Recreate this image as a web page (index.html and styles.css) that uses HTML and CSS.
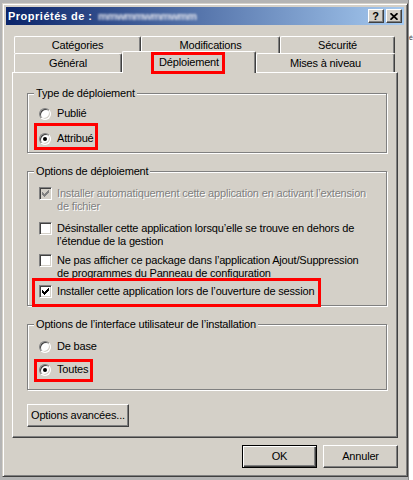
FILE: index.html
```html
<!DOCTYPE html>
<html lang="fr">
<head>
<meta charset="utf-8">
<title>Propriétés</title>
<link rel="stylesheet" href="styles.css">
</head>
<body>
<div class="window">
  <div class="titlebar">
    <span class="title">Propriétés de : <span class="blur">mmwmmwmmwmm</span></span>
    <div class="capbtns">
      <span class="capbtn help">?</span>
      <span class="capbtn close"><svg width="8" height="7" viewBox="0 0 8 7"><path d="M0.5 0.2 L7.5 6.8 M7.5 0.2 L0.5 6.8" stroke="#000" stroke-width="1.7" fill="none"/></svg></span>
    </div>
  </div>
  <div class="client">
    <div class="tabs">
      <div class="tabrow row1">
        <div class="tab w-cat">Catégories</div>
        <div class="tab w-mod">Modifications</div>
        <div class="tab w-sec">Sécurité</div>
      </div>
      <div class="tabrow row2">
        <div class="tab w-gen">Général</div>
        <div class="tab w-dep sel"><span class="hl hl-dep">Déploiement</span></div>
        <div class="tab w-maj">Mises à niveau</div>
      </div>
    </div>
    <div class="panel">
      <div class="group g1">
        <div class="legend">Type de déploiement</div>
        <div class="opt o-pub"><span class="radio"></span><span class="txt">Publié</span></div>
        <div class="opt o-att hl hl-attr"><span class="radio on"></span><span class="txt">Attribué</span></div>
      </div>
      <div class="group g2">
        <div class="legend">Options de déploiement</div>
        <div class="opt c1 disabled"><span class="check dis"><svg width="13" height="13" viewBox="0 0 13 13"><g fill="#808080"><rect x="3" y="5" width="1" height="3"/><rect x="4" y="6" width="1" height="3"/><rect x="5" y="7" width="1" height="3"/><rect x="6" y="6" width="1" height="3"/><rect x="7" y="5" width="1" height="3"/><rect x="8" y="4" width="1" height="3"/><rect x="9" y="3" width="1" height="3"/></g></svg></span><span class="txt">Installer automatiquement cette application en activant l’extension<br>de fichier</span></div>
        <div class="opt c2"><span class="check"></span><span class="txt">Désinstaller cette application lorsqu’elle se trouve en dehors de<br>l’étendue de la gestion</span></div>
        <div class="opt c3"><span class="check"></span><span class="txt">Ne pas afficher ce package dans l’application Ajout/Suppression<br>de programmes du Panneau de configuration</span></div>
        <div class="opt c4 hl hl-inst"><span class="check"><svg width="13" height="13" viewBox="0 0 13 13"><g fill="#000"><rect x="3" y="5" width="1" height="3"/><rect x="4" y="6" width="1" height="3"/><rect x="5" y="7" width="1" height="3"/><rect x="6" y="6" width="1" height="3"/><rect x="7" y="5" width="1" height="3"/><rect x="8" y="4" width="1" height="3"/><rect x="9" y="3" width="1" height="3"/></g></svg></span><span class="txt">Installer cette application lors de l’ouverture de session</span></div>
      </div>
      <div class="group g3">
        <div class="legend">Options de l’interface utilisateur de l’installation</div>
        <div class="opt o-base"><span class="radio"></span><span class="txt">De base</span></div>
        <div class="opt o-tout hl hl-tout"><span class="radio on"></span><span class="txt">Toutes</span></div>
      </div>
      <div class="btn adv">Options avancées...</div>
    </div>
    <div class="footer">
      <div class="btn default">OK</div>
      <div class="btn">Annuler</div>
    </div>
  </div>
</div>
<div class="behind"><span class="behind-txt">é</span></div>
</body>
</html>
```
FILE: styles.css
```css
* { box-sizing: border-box; }
html, body { margin: 0; padding: 0; }
body {
  width: 413px;
  height: 480px;
  overflow: hidden;
  background: #b4b4b4;
  display: flex;
  align-items: flex-start;
  padding: 3px 0 0 2px;
  font-family: "Liberation Sans", Arial, sans-serif;
  font-size: 11px;
  line-height: 13px;
  letter-spacing: -0.17px;
  color: #000;
}
.window {
  width: 406px;
  height: 474px;
  flex: none;
  background: #d4d0c8;
  border: 1px solid;
  border-color: #d4d0c8 #404040 #404040 #d4d0c8;
  box-shadow: inset 1px 1px #fff, inset -1px -1px #808080;
  padding: 3px;
  display: flex;
  flex-direction: column;
}
.behind {
  flex: 1;
  align-self: stretch;
  margin-top: -3px;
  background: #fff;
  border-left: 1px solid #8c8c8c;
  padding-top: 33px;
  overflow: hidden;
}
.behind-txt {
  display: block;
  font-size: 7px;
  line-height: 9px;
  letter-spacing: 0;
  color: #404040;
}
.titlebar {
  height: 18px;
  flex: none;
  background: linear-gradient(to right, #0a246a, #a6caf0);
  display: flex;
  align-items: center;
  padding: 0 2px;
}
.title {
  flex: 1;
  color: #fff;
  font-weight: bold;
  letter-spacing: 0.5px;
  white-space: nowrap;
  overflow: hidden;
}
.blur {
  color: #dfe2ec;
  filter: blur(1.3px);
  letter-spacing: -0.5px;
  font-weight: bold;
  margin-left: 2px;
}
.capbtns { display: flex; gap: 2px; }
.capbtn {
  width: 16px;
  height: 14px;
  background: #d4d0c8;
  border: 1px solid;
  border-color: #fff #404040 #404040 #fff;
  box-shadow: inset -1px -1px #808080;
  display: flex;
  align-items: center;
  justify-content: center;
  font-weight: bold;
  font-size: 11px;
  letter-spacing: 0;
}
.help { padding-right: 1px; }
.close svg { display: block; }
.client { flex: 1; display: flex; flex-direction: column; }
.tabs { margin: 11px 0 0 8px; width: 381px; }
.tabrow { display: flex; }
.row1 { height: 17px; }
.row2 { height: 19px; align-items: flex-end; }
.tab {
  background: #d4d0c8;
  border-top: 1px solid #fff;
  border-left: 1px solid #fff;
  border-right: 1px solid #404040;
  border-radius: 2px 2px 0 0;
  box-shadow: inset -1px 0 #808080;
  text-align: center;
  white-space: nowrap;
  flex: none;
}
.row1 .tab { height: 17px; padding-top: 2px; }
.row2 .tab { height: 19px; padding-top: 3px; }
.row2 .tab.sel {
  height: 22px;
  padding-top: 4px;
  margin-bottom: -1px;
  position: relative;
  z-index: 1;
}
.w-cat { width: 127px; }
.w-mod { width: 139px; }
.w-sec { width: 115px; }
.w-gen { width: 108px; }
.w-dep { width: 134px; }
.w-maj { width: 139px; }
.panel {
  margin-left: 6px;
  width: 386px;
  height: 366px;
  flex: none;
  border: 1px solid;
  border-color: #fff #404040 #404040 #fff;
  box-shadow: inset -1px -1px #808080;
  padding: 20px 0 0 14px;
}
.group {
  width: 360px;
  border: 1px solid #808080;
  box-shadow: inset 1px 1px #fff, 1px 1px #fff;
  padding-left: 11px;
}
.g1 { height: 60px; }
.g2 { height: 135px; margin-top: 18px; }
.g3 { height: 66px; margin-top: 18px; }
.legend {
  display: table;
  margin: -7px 0 0 -5px;
  padding: 0 2px;
  background: #d4d0c8;
  white-space: nowrap;
}
.opt { display: flex; width: fit-content; align-items: flex-start; white-space: nowrap; }
.o-pub { margin-top: 7px; }
.o-att { margin-top: 12px; }
.c1 { margin-top: 9px; }
.c2 { margin-top: 9px; }
.c3 { margin-top: 6px; }
.c4 { margin-top: 5px; }
.o-base { margin-top: 9px; }
.o-tout { margin-top: 10px; }
.radio {
  width: 12px;
  height: 12px;
  flex: none;
  margin: 1px 6px 0 0;
  border-radius: 50%;
  background: #fff;
  border: 1px solid;
  border-color: #808080 #fff #fff #808080;
  box-shadow: inset 1px 1px #404040, inset -1px -1px #d4d0c8;
  display: flex;
  align-items: center;
  justify-content: center;
}
.radio.on::after {
  content: "";
  width: 4px;
  height: 4px;
  border-radius: 50%;
  background: #000;
}
.check {
  width: 13px;
  height: 13px;
  flex: none;
  margin-right: 5px;
  background: #fff;
  border: 1px solid;
  border-color: #808080 #fff #fff #808080;
  box-shadow: inset 1px 1px #404040, inset -1px -1px #d4d0c8;
  position: relative;
}
.check svg { display: block; margin: -1px; }
.check.dis { background: #d4d0c8; }
.disabled .txt { color: #808080; text-shadow: 1px 1px #fff; }
.hl { position: relative; }
.hl::after {
  content: "";
  position: absolute;
  border: 3px solid #ff0000;
  pointer-events: none;
}
.hl-dep::after { top: -4px; bottom: -6px; left: -8px; right: -6px; }
.hl-attr::after { top: -9px; bottom: -5px; left: -5px; right: -4px; }
.hl-inst::after { top: -7px; bottom: -9px; left: -7px; right: -7px; }
.hl-tout::after { top: -4px; bottom: -6px; left: -5px; right: -5px; }
.btn {
  height: 23px;
  background: #d4d0c8;
  border: 1px solid;
  border-color: #fff #404040 #404040 #fff;
  box-shadow: inset -1px -1px #808080;
  display: flex;
  align-items: center;
  justify-content: center;
  white-space: nowrap;
}
.adv { width: 102px; margin-top: 14px; }
.footer {
  margin-top: 7px;
  display: flex;
  justify-content: flex-end;
  gap: 6px;
  padding-right: 6px;
}
.footer .btn { width: 75px; }
.btn.default {
  border-color: #000;
  box-shadow: inset 1px 1px #fff, inset -1px -1px #404040, inset -2px -2px #808080;
}
```
